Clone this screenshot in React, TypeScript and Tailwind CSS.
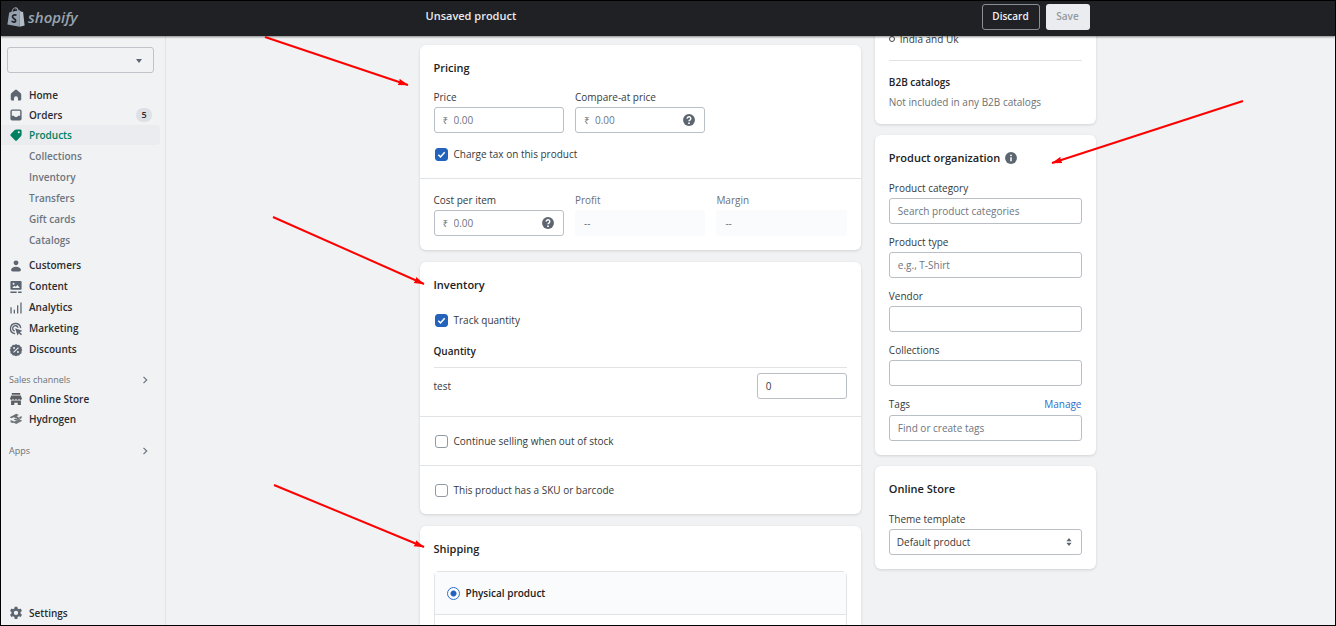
import type { ReactNode } from "react";

function Icon({ children, className = "text-[#5c5f62]" }: { children: ReactNode; className?: string }) {
  return (
    <svg viewBox="0 0 20 20" className={`size-3.5 shrink-0 ${className}`} fill="currentColor" aria-hidden="true">
      {children}
    </svg>
  );
}

const slate = "text-[#5c6570]";

const HomeIcon = (
  <Icon className={slate}>
    <path d="M17.500 9.300V16a1.800 1.800 0 0 1-1.800 1.800h-2.900v-3.300a2.800 2.800 0 0 0-5.600 0v3.300H4.300A1.800 1.800 0 0 1 2.500 16V9.300c0-.9.4-1.700 1.100-2.300l5.100-4.300a2 2 0 0 1 2.600 0L16.400 7c.7.600 1.100 1.400 1.100 2.300z" />
  </Icon>
);
const OrdersIcon = (
  <Icon className={slate}>
    <path fillRule="evenodd" d="M4.500 2h11A2.500 2.500 0 0 1 18 4.500v11a2.500 2.500 0 0 1-2.500 2.500h-11A2.500 2.500 0 0 1 2 15.500v-11A2.500 2.500 0 0 1 4.500 2zM4 4v7h2.600c.500 0 .8.300 1 .7l.3.600c.2.400.6.700 1 .7h2.200c.400 0 .8-.3 1-.7l.3-.6c.2-.4.500-.7 1-.7H16V4z" />
  </Icon>
);
const ProductsIcon = (
  <Icon className="text-[#008060]">
    <path fillRule="evenodd" d="M10.300 2H16a2 2 0 0 1 2 2v5.700c0 .8-.3 1.600-.9 2.200l-5.500 5.500a2.200 2.200 0 0 1-3.100 0l-5.900-5.900a2.200 2.200 0 0 1 0-3.100l5.500-5.500C8.700 2.300 9.500 2 10.300 2zM14 7.500a1.500 1.500 0 1 0 0-3 1.500 1.500 0 0 0 0 3z" />
  </Icon>
);
const CustomersIcon = (
  <Icon className={slate}>
    <circle cx="10" cy="5.500" r="3.500" />
    <path d="M3 15.500c0-2.500 3-4.500 7-4.500s7 2 7 4.500c0 1.400-.9 2.500-2.300 2.500H5.300C3.900 18 3 16.900 3 15.500z" />
  </Icon>
);
const ContentIcon = (
  <Icon className={slate}>
    <path fillRule="evenodd" d="M3.500 1.500h13A1.500 1.500 0 0 1 18 3v9.500a1.500 1.500 0 0 1-1.500 1.500h-13A1.500 1.500 0 0 1 2 12.500V3a1.500 1.500 0 0 1 1.500-1.500zM4.500 11.500h11l-3.300-4.400-2.600 2.700-2-1.700zM6.500 6.800a1.400 1.400 0 1 0 0-2.800 1.400 1.400 0 0 0 0 2.800zM2 16.500h9v2H2zm11 0h5v2h-5z" />
  </Icon>
);
const AnalyticsIcon = (
  <Icon className={slate}>
    <path d="M2 9h1.800v9H2zM6.700 12.500h1.800V18H6.700zM11.500 6h1.800v12h-1.800zM16.200 2H18v16h-1.800z" />
  </Icon>
);
const MarketingIcon = (
  <Icon className={slate}>
    <g fill="none" stroke="currentColor" strokeWidth="1.900" strokeLinecap="round">
      <path d="M8 16.600A7.300 7.300 0 1 1 16.600 8" />
      <path d="M7.500 12.700a3.900 3.900 0 1 1 5.200-5.200" />
    </g>
    <path d="M8.800 8.800 19 12.600l-3.400 2 3 3-1.500 1.500-3-3-2 3.200z" />
  </Icon>
);
const DiscountsIcon = (
  <Icon className={slate}>
    <path fillRule="evenodd" d="m10 1.500 2.200 1.200 2.500-.2 1.200 2.200 2.200 1.300-.1 2.500L19 10l-1.200 2 .2 2.500-2.200 1.200-1.200 2.200-2.500-.1L10 19l-2.100-1.200-2.500.1-1.200-2.200L2 14.500l.2-2.500L1 10l1.200-1.500L2 6l2.200-1.300 1.200-2.200 2.500.2zM7.200 8.600a1.400 1.400 0 1 0 0-2.800 1.400 1.400 0 0 0 0 2.800zm5.600 5.600a1.400 1.400 0 1 0 0-2.800 1.400 1.400 0 0 0 0 2.800zm.2-8.300L5.900 13 7 14.100 14.100 7z" />
  </Icon>
);
const StoreIcon = (
  <Icon>
    <path d="M4 1.500h12v2.300H4zM3.200 5h13.600l1.700 4.200c0 1.200-1 2.100-2.100 2.100-1.200 0-2.100-.9-2.100-2.100 0 1.200-1 2.100-2.200 2.100S10 10.400 10 9.200c0 1.200-.9 2.100-2.100 2.100S5.700 10.400 5.700 9.200c0 1.200-.9 2.100-2.100 2.100S1.500 10.400 1.500 9.200zM3 12h14v6.500h-4.500v-3.300h-5v3.300H3z" />
  </Icon>
);
const HydrogenIcon = (
  <Icon>
    <path d="m10.400 2.500 3.700 1.700-3.300 1.700 3.500 1.600L18 5.800V9l-7.400 3.400-4-1.800 3.300-1.600-3.200-1.500L3.400 9 1 7.600z" opacity=".9" />
    <path d="m1 10.700 6.500 3 4-1.700 3.200-1.500L19 12.400l-8.600 4.600-3.900-1.800-1.800.5L1 14l2.500-1.200z" opacity=".85" />
    <path d="m9 8.900 2.800 1.200M13.500 8l2 1" stroke="#f1f2f4" strokeWidth="1" />
  </Icon>
);
const SettingsIcon = (
  <Icon className={slate}>
    <path fillRule="evenodd" d="M8.100 1h3.800l.5 2.600 1.700 1 2.500-.9 1.900 3.300-2 1.700v2l2 1.700-1.900 3.300-2.500-.9-1.700 1-.5 2.700H8.100l-.5-2.700-1.700-1-2.500.9L1.500 12.400l2-1.700v-2L1.500 7l1.900-3.300 2.500.9 1.700-1zM10 12.900a3.100 3.100 0 1 0 0-6.200 3.100 3.100 0 0 0 0 6.200z" />
  </Icon>
);
const HelpIcon = (
  <Icon className={slate}>
    <circle cx="10" cy="10" r="8.500" />
    <path d="M7.500 8.100a2.500 2.500 0 1 1 4 1.800c-.9.600-1.500.9-1.500 1.900" fill="none" stroke="#fff" strokeWidth="2.100" />
    <circle cx="10" cy="14.500" r="1.300" fill="#fff" />
  </Icon>
);
const InfoIcon = (
  <Icon className={slate}>
    <circle cx="10" cy="10" r="8.500" />
    <path d="M10 9v5.500" stroke="#fff" strokeWidth="2.200" />
    <circle cx="10" cy="6.200" r="1.300" fill="#fff" />
  </Icon>
);

function NavItem({ icon, label, badge, active }: { icon: ReactNode; label: string; badge?: string; active?: boolean }) {
  return (
    <li>
      <a
        href="#"
        className={`mr-[5px] flex h-full items-center gap-1.5 rounded-r-sm px-2 font-semibold ${
          active ? "bg-[#ebecef] text-[#008060]" : "text-[#2a2c2f]"
        }`}
      >
        {icon}
        <span className="grow">{label}</span>
        {badge && <span className="w-4 rounded-full bg-[#dde0e4] text-center text-[9px] leading-[14px]">{badge}</span>}
      </a>
    </li>
  );
}

function NavHeading({ label }: { label: string }) {
  return (
    <button type="button" className="flex h-[19px] w-full items-center justify-between pr-4 pl-2 text-[9px] text-[#6d7175]">
      {label}
      <svg viewBox="0 0 8 8" className="size-2" fill="none" stroke="#6d7580" strokeWidth="1.200" aria-hidden="true">
        <path d="m2.500.8 3.200 3.200-3.200 3.200" />
      </svg>
    </button>
  );
}

function Sidebar() {
  return (
    <nav className="flex w-[165px] shrink-0 flex-col border-r border-[#e1e3e5] pt-[11px] text-[10px]">
      <div className="relative mr-[11px] ml-1.5">
        <select aria-label="Store" className="h-[26px] w-full appearance-none rounded-[3px] border border-[#c0c4ca] bg-transparent" />
        <span className="pointer-events-none absolute top-3 right-3 border-x-[3px] border-t-4 border-x-transparent border-t-[#5c6570]" />
      </div>
      <ul className="mt-3 grid auto-rows-[20px]">
        <NavItem icon={HomeIcon} label="Home" />
        <NavItem icon={OrdersIcon} label="Orders" badge="5" />
        <NavItem icon={ProductsIcon} label="Products" active />
      </ul>
      <ul className="mt-px grid auto-rows-[21px] items-center">
        {["Collections", "Inventory", "Transfers", "Gift cards", "Catalogs"].map((label) => (
          <li key={label}>
            <a href="#" className="block pl-7 font-semibold text-[#6d7580]">
              {label}
            </a>
          </li>
        ))}
      </ul>
      <ul className="mt-1 grid auto-rows-[21px]">
        <NavItem icon={CustomersIcon} label="Customers" />
        <NavItem icon={ContentIcon} label="Content" />
        <NavItem icon={AnalyticsIcon} label="Analytics" />
        <NavItem icon={MarketingIcon} label="Marketing" />
        <NavItem icon={DiscountsIcon} label="Discounts" />
      </ul>
      <div className="mt-2.5">
        <NavHeading label="Sales channels" />
        <ul className="grid auto-rows-[20px]">
          <NavItem icon={StoreIcon} label="Online Store" />
          <NavItem icon={HydrogenIcon} label="Hydrogen" />
        </ul>
      </div>
      <div className="mt-3">
        <NavHeading label="Apps" />
      </div>
      <ul className="mt-auto mb-0.5 grid auto-rows-[20px]">
        <NavItem icon={SettingsIcon} label="Settings" />
      </ul>
    </nav>
  );
}

const card = "rounded-md bg-white shadow-[0_1px_3px_rgba(23,24,24,0.14)]";
const heading = "text-[11px] leading-[18px] font-semibold text-[#202223]";
const control =
  "flex h-[26px] items-center rounded-[3px] border border-[#babfc5] bg-white focus-within:border-[#2c6ecb]";

type FieldProps = { id: string; label: string; placeholder?: string; money?: boolean; help?: boolean };

function Field({ id, label, placeholder, money, help }: FieldProps) {
  return (
    <div className="flex min-w-0 flex-col gap-[3px]">
      <label htmlFor={id} className="leading-[14px]">
        {label}
      </label>
      <div className={`${control} px-2`}>
        {money && <span className="w-[11px] shrink-0 text-[#6d7175]">₹</span>}
        <input id={id} placeholder={placeholder} className="w-0 min-w-0 grow outline-none placeholder:text-[#6d7580]" />
        {help && HelpIcon}
      </div>
    </div>
  );
}

function Readout({ label }: { label: string }) {
  return (
    <div className="flex flex-col gap-[3px] text-[#6d7175]">
      <span className="leading-[14px]">{label}</span>
      <div className="flex h-[26px] items-center rounded-[3px] bg-[#fafbfc] px-[9px]">--</div>
    </div>
  );
}

function Checkbox({ label, checked }: { label: string; checked?: boolean }) {
  return (
    <label className="flex h-[15px] items-center gap-1.5">
      <span className="ml-px grid size-[13px]">
        <input
          type="checkbox"
          defaultChecked={checked}
          className="peer col-start-1 row-start-1 size-[13px] appearance-none rounded-[3px] border border-[#9299a1] bg-white checked:border-[#2463bc] checked:bg-[#2463bc]"
        />
        <svg
          viewBox="0 0 13 13"
          className="pointer-events-none invisible col-start-1 row-start-1 size-[13px] peer-checked:visible"
          fill="none"
          stroke="#fff"
          strokeWidth="1.500"
          aria-hidden="true"
        >
          <path d="m3.300 6.700 2.200 2.200 4.200-4.600" />
        </svg>
      </span>
      {label}
    </label>
  );
}

function ProductForm() {
  return (
    <div className="flex flex-col gap-3 pt-[9px]">
      <section className={card}>
        <div className="px-3.5 pt-3.5 pb-4">
          <h2 className={heading}>Pricing</h2>
          <div className="mt-[13px] mb-3.5 grid grid-cols-3 gap-[11px]">
            <Field id="price" label="Price" placeholder="0.00" money />
            <Field id="compare" label="Compare-at price" placeholder="0.00" money help />
          </div>
          <Checkbox label="Charge tax on this product" checked />
        </div>
        <div className="grid grid-cols-3 gap-[11px] border-t border-[#e1e3e5] p-3.5">
          <Field id="cost" label="Cost per item" placeholder="0.00" money help />
          <Readout label="Profit" />
          <Readout label="Margin" />
        </div>
      </section>

      <section className={card}>
        <div className="px-3.5 pt-3.5 pb-[17px]">
          <h2 className={`${heading} mb-[19px]`}>Inventory</h2>
          <Checkbox label="Track quantity" checked />
          <h3 className="mt-4 border-b border-[#e1e3e5] pb-2 leading-[15px] font-semibold text-[#202223]">Quantity</h3>
          <div className="mt-[5px] flex items-center justify-between">
            <label htmlFor="quantity">test</label>
            <div className={`${control} w-[90px] px-2`}>
              <input id="quantity" defaultValue="0" className="w-0 min-w-0 grow outline-none" />
            </div>
          </div>
        </div>
        <div className="flex h-[49px] items-center border-t border-[#e1e3e5] px-3.5">
          <Checkbox label="Continue selling when out of stock" />
        </div>
        <div className="flex h-[49px] items-center border-t border-[#e1e3e5] px-3.5">
          <Checkbox label="This product has a SKU or barcode" />
        </div>
      </section>

      <section className={`${card} p-3.5`}>
        <h2 className={heading}>Shipping</h2>
        <div className="mt-[13px] rounded-[5px] border border-[#e1e3e5]">
          <label className="flex h-[43px] items-center gap-1.5 border-b border-[#e1e3e5] bg-[#fafbfc] px-3 font-semibold text-[#202223]">
            <input
              type="radio"
              defaultChecked
              className="size-[13px] appearance-none rounded-full border border-[#2c6ecb] bg-white bg-[radial-gradient(circle,#2463bc_0_2.500px,transparent_3.500px)]"
            />
            Physical product
          </label>
          <div className="h-16" />
        </div>
      </section>
    </div>
  );
}

function ProductAside() {
  return (
    <aside className="-mt-5 flex flex-col gap-[11px]">
      <section className={`${card} px-3.5 pt-4 pb-3.5`}>
        <div className="flex items-center gap-[5px] border-b border-[#e1e3e5] pb-3.5 leading-[14px]">
          <span className="size-1.5 rounded-full border border-[#44474a]" />
          India and Uk
        </div>
        <h3 className="mt-3.5 leading-[15px] font-semibold text-[#202223]">B2B catalogs</h3>
        <p className="mt-[5px] leading-[15px] text-[#6d7175]">Not included in any B2B catalogs</p>
      </section>

      <section className={`${card} p-3.5`}>
        <h2 className={`${heading} flex items-center gap-1`}>Product organization {InfoIcon}</h2>
        <div className="mt-3.5 flex flex-col gap-[11px]">
          <Field id="category" label="Product category" placeholder="Search product categories" />
          <Field id="type" label="Product type" placeholder="e.g., T-Shirt" />
          <Field id="vendor" label="Vendor" />
          <Field id="collections" label="Collections" />
          <div className="flex flex-col gap-[3px]">
            <div className="flex justify-between leading-[15px]">
              <label htmlFor="tags">Tags</label>
              <a href="#" className="text-[#2c6ecb]">
                Manage
              </a>
            </div>
            <div className={`${control} px-2`}>
              <input id="tags" placeholder="Find or create tags" className="w-0 min-w-0 grow outline-none placeholder:text-[#6d7580]" />
            </div>
          </div>
        </div>
      </section>

      <section className={`${card} p-3.5`}>
        <h2 className={heading}>Online Store</h2>
        <div className="mt-3.5 flex flex-col gap-[3px]">
          <label htmlFor="template" className="leading-[14px]">
            Theme template
          </label>
          <div className="grid items-center">
            <select
              id="template"
              className="col-start-1 row-start-1 h-[26px] w-full appearance-none rounded-[3px] border border-[#babfc5] bg-white px-[7px]"
            >
              <option>Default product</option>
            </select>
            <svg
              viewBox="0 0 6 8"
              className="pointer-events-none col-start-1 row-start-1 mr-2.5 h-2 w-1.5 justify-self-end"
              fill="#5c6570"
              aria-hidden="true"
            >
              <path d="M3 0 5.600 3.200H.4zM3 8 .4 4.800h5.200z" />
            </svg>
          </div>
        </div>
      </section>
    </aside>
  );
}

function Logo() {
  return (
    <a href="#" className="flex items-center gap-[3px] pl-1.5 text-[#98a4b1]">
      <svg viewBox="0 0 18 20" className="h-5 w-[18px]" aria-hidden="true">
        <path d="M2.200 5.500 12.300 3l.4 16.800L.4 17.500z" fill="#95a1ae" />
        <path d="m12.300 3 1.500 1.600 2.300.3L17.600 18.500l-4.900 1.300z" fill="#b4bdc7" />
        <path d="M4.800 6C5 3 6.800.8 8.600.8c1.600 0 2.300 1.600 2.300 4" fill="none" stroke="#95a1ae" strokeWidth="1.100" />
        <path d="M8.200 2.200c1-.9 2.700-.9 3.300 1.600" fill="none" stroke="#95a1ae" strokeWidth=".8" />
        <path
          d="M9.500 8.300c-1.900-1-4-.2-4 1.500 0 1.900 3.200 1.900 3.200 3.900 0 1.600-2.300 1.900-4.100.5"
          fill="none"
          stroke="#202124"
          strokeWidth="1.700"
        />
      </svg>
      <span className="text-[15px] leading-5 font-semibold italic">shopify</span>
    </a>
  );
}

function TopBar() {
  return (
    <header className="z-10 flex h-[35px] shrink-0 items-center bg-[#202124] pb-1 shadow-[0_1px_2px_rgba(0,0,0,0.45)]">
      <div className="w-[165px] shrink-0">
        <Logo />
      </div>
      <div className="grow pl-3.5">
        <div className="mx-auto flex max-w-[664px] items-center justify-between">
          <h1 className="text-[11px] font-semibold text-[#e8eaed]">Unsaved product</h1>
          <div className="flex gap-1.5 text-[10px] font-semibold">
            <button type="button" className="h-[26px] w-[58px] rounded-[3px] border border-[#8a8f96] text-[#f1f2f4]">
              Discard
            </button>
            <button type="button" disabled className="h-[26px] w-11 rounded-[3px] bg-[#ebecef] text-[#9299a1]">
              Save
            </button>
          </div>
        </div>
      </div>
    </header>
  );
}

const arrows = [
  [264, 36, 407, 84],
  [272, 216, 423, 283],
  [273, 484, 423, 546],
  [1242, 100, 1051, 162],
];

function Annotations() {
  return (
    <svg className="pointer-events-none absolute inset-0 z-20 h-full w-full" aria-hidden="true">
      <defs>
        <marker id="head" markerUnits="userSpaceOnUse" markerWidth="11" markerHeight="8" refX="10" refY="4" orient="auto">
          <path d="M0 .7 10.500 4 0 7.300 1 4z" fill="#ff0000" />
        </marker>
      </defs>
      {arrows.map(([x1, y1, x2, y2]) => (
        <line key={y1} x1={x1} y1={y1} x2={x2} y2={y2} stroke="#ff0000" strokeWidth="2" markerEnd="url(#head)" />
      ))}
    </svg>
  );
}

export default function App() {
  return (
    <div className="relative flex h-screen flex-col overflow-hidden border border-black bg-[#f1f2f4] font-['Open_Sans','Noto_Sans',sans-serif] text-[10px] text-[#36393c]">
      <TopBar />
      <div className="flex min-h-0 grow">
        <Sidebar />
        <main className="min-w-0 grow overflow-y-auto pl-3.5 [scrollbar-width:none]">
          <div className="mx-auto grid max-w-[676px] grid-cols-[2fr_1fr] items-start gap-3.5">
            <ProductForm />
            <ProductAside />
          </div>
        </main>
      </div>
      <Annotations />
    </div>
  );
}
